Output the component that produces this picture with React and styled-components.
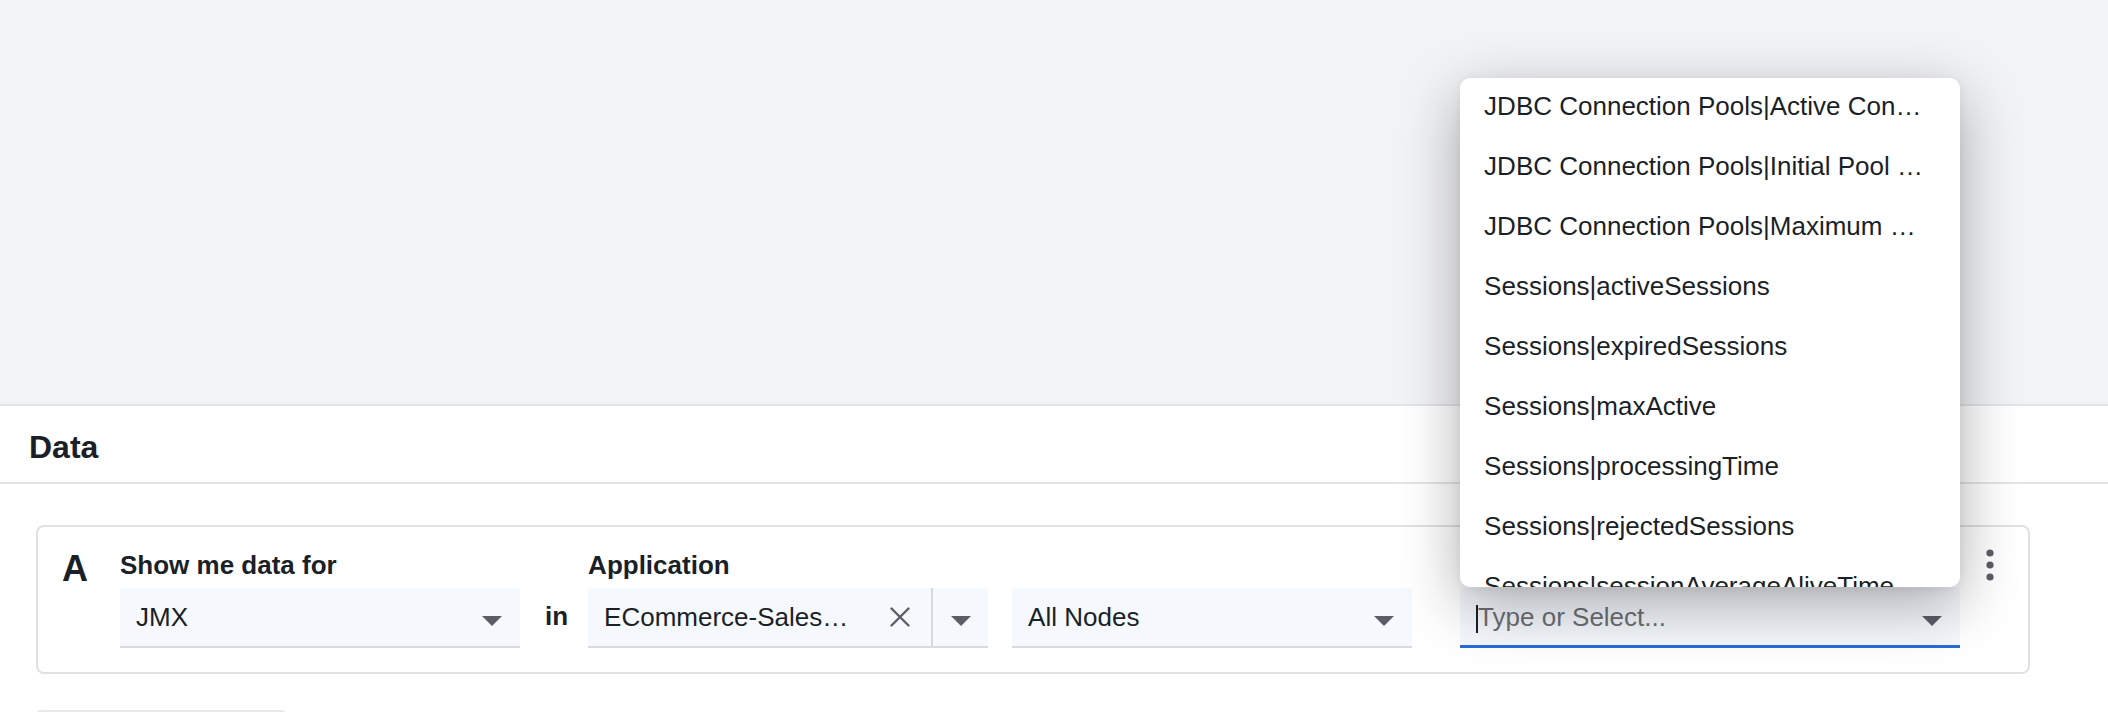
import React from "react";
import styled, { createGlobalStyle } from "styled-components";

const GlobalStyle = createGlobalStyle`
  html, body {
    margin: 0;
    padding: 0;
    overflow: hidden;
    background: #ffffff;
    font-family: "Liberation Sans", Arial, Helvetica, sans-serif;
    color: #1b1f27;
  }
  * { box-sizing: border-box; }
`;

const Page = styled.div`
  width: 2108px;
`;

const TopArea = styled.div`
  height: 404px;
  background: #f2f3f5;
`;

const SectionHeader = styled.div`
  height: 80px;
  padding: 6px 0 0 29px;
  line-height: 70px;
  font-size: 32px;
  font-weight: 700;
  border-top: 2px solid #e3e4e6;
  border-bottom: 2px solid #e3e4e6;
`;

const Content = styled.div`
  padding: 41px 78px 0 36px;
`;

const Card = styled.div`
  display: flex;
  align-items: flex-start;
  border: 2px solid #e0e1e3;
  border-radius: 8px;
  padding: 23px 18px 24px 24px;
`;

const Letter = styled.div`
  flex: none;
  width: 26px;
  margin: 1px 32px 0 0;
  font-size: 36px;
  font-weight: 700;
  line-height: 36px;
`;

const Field = styled.div`
  flex: none;
  width: ${(p) => p.$w}px;
  margin-left: ${(p) => p.$ml || 0}px;
  display: flex;
  flex-direction: column;
  gap: 8px;
`;

const Label = styled.div`
  height: 30px;
  line-height: 30px;
  font-size: 26px;
  font-weight: 700;
  white-space: nowrap;
`;

const Connector = styled.div`
  flex: none;
  align-self: flex-end;
  height: 60px;
  padding: 13px 20px 0 25px;
  line-height: 30px;
  font-size: 26px;
  font-weight: 700;
`;

const SelectBox = styled.div`
  position: relative;
  display: flex;
  align-items: center;
  height: 60px;
  background: #f5f8fd;
  border-bottom: ${(p) => (p.$focused ? "3px solid #2a6bd8" : "2px solid #d9dadd")};
`;

const Value = styled.div`
  flex: 1;
  min-width: 0;
  display: flex;
  align-items: center;
  padding: 0 ${(p) => p.$pr || 12}px 0 16px;
`;

const ValueText = styled.span`
  min-width: 0;
  font-size: 26px;
  line-height: 30px;
  white-space: nowrap;
  overflow: hidden;
  text-overflow: ellipsis;
  color: ${(p) => (p.$placeholder ? "#6e7076" : "#1b1f27")};
`;

const Cursor = styled.span`
  flex: none;
  width: 2px;
  height: 28px;
  margin-top: 5px;
  background: #1b1f27;
`;

const Caret = styled.div`
  flex: none;
  display: flex;
  padding-top: 8px;
  margin-right: ${(p) => (p.$mr === undefined ? 18 : p.$mr)}px;
`;

const ClearButton = styled.div`
  flex: none;
  width: 40px;
  margin-right: 11px;
  display: flex;
  justify-content: center;
`;

const Divider = styled.div`
  flex: none;
  align-self: stretch;
  width: 2px;
  background: #d8d9dc;
`;

const ArrowButton = styled.div`
  flex: none;
  width: 55px;
  display: flex;
  justify-content: center;
`;

const Panel = styled.div`
  position: absolute;
  left: 0;
  right: 0;
  bottom: calc(100% + 1px);
  height: 509px;
  background: #ffffff;
  border-radius: 10px;
  overflow: hidden;
  z-index: 20;
  box-shadow: 0 18px 60px rgba(0, 0, 0, 0.32), 0 2px 10px rgba(0, 0, 0, 0.06);
`;

const OptionList = styled.div`
  margin-top: -2px;
`;

const Option = styled.div`
  height: 60px;
  line-height: 60px;
  padding: 0 32px 0 24px;
  font-size: 26px;
  white-space: nowrap;
  overflow: hidden;
  text-overflow: ellipsis;
  color: #1b1f27;
`;

const Kebab = styled.div`
  flex: none;
  width: 40px;
  height: 30px;
  margin-left: 10px;
  display: flex;
  align-items: center;
  justify-content: center;
`;

const AddButton = styled.div`
  width: 255px;
  height: 60px;
  margin: 36px 0 0 -2px;
  border: 2px solid #e8e9eb;
  border-radius: 8px;
`;

const ArrowIcon = () => (
  <svg width="20" height="10" viewBox="0 0 20 10">
    <polygon points="0,0 20,0 10,10" fill="#5c5e66" />
  </svg>
);

const ClearIcon = () => (
  <svg width="20" height="20" viewBox="0 0 20 20">
    <path d="M1.5 1.5 L18.5 18.5 M18.5 1.5 L1.5 18.5" stroke="#5c5e66" strokeWidth="2.4" strokeLinecap="round" />
  </svg>
);

const KebabIcon = () => (
  <svg width="8" height="32" viewBox="0 0 8 32">
    <circle cx="4" cy="4" r="3.6" fill="#5c5e66" />
    <circle cx="4" cy="16" r="3.6" fill="#5c5e66" />
    <circle cx="4" cy="28" r="3.6" fill="#5c5e66" />
  </svg>
);

const options = [
  "JDBC Connection Pools|Active Connections",
  "JDBC Connection Pools|Initial Pool Size",
  "JDBC Connection Pools|Maximum Pool Size",
  "Sessions|activeSessions",
  "Sessions|expiredSessions",
  "Sessions|maxActive",
  "Sessions|processingTime",
  "Sessions|rejectedSessions",
  "Sessions|sessionAverageAliveTime",
  "Sessions|sessionCounter",
];

export default function App() {
  return (
    <Page>
      <GlobalStyle />
      <TopArea />
      <SectionHeader>Data</SectionHeader>
      <Content>
        <Card>
          <Letter>A</Letter>
          <Field $w={400}>
            <Label>Show me data for</Label>
            <SelectBox>
              <Value>
                <ValueText>JMX</ValueText>
              </Value>
              <Caret>
                <ArrowIcon />
              </Caret>
            </SelectBox>
          </Field>
          <Connector>in</Connector>
          <Field $w={400}>
            <Label>Application</Label>
            <SelectBox>
              <Value $pr={28}>
                <ValueText>ECommerce-Sales-Demo</ValueText>
              </Value>
              <ClearButton>
                <ClearIcon />
              </ClearButton>
              <Divider />
              <ArrowButton>
                <Caret $mr={0}>
                  <ArrowIcon />
                </Caret>
              </ArrowButton>
            </SelectBox>
          </Field>
          <Field $w={400} $ml={24}>
            <Label />
            <SelectBox>
              <Value>
                <ValueText>All Nodes</ValueText>
              </Value>
              <Caret>
                <ArrowIcon />
              </Caret>
            </SelectBox>
          </Field>
          <Field $w={500} $ml={48}>
            <Label />
            <SelectBox $focused>
              <Panel>
                <OptionList>
                  {options.map((o) => (
                    <Option key={o}>{o}</Option>
                  ))}
                </OptionList>
              </Panel>
              <Value>
                <Cursor />
                <ValueText $placeholder>Type or Select...</ValueText>
              </Value>
              <Caret>
                <ArrowIcon />
              </Caret>
            </SelectBox>
          </Field>
          <Kebab>
            <KebabIcon />
          </Kebab>
        </Card>
        <AddButton />
      </Content>
    </Page>
  );
}
